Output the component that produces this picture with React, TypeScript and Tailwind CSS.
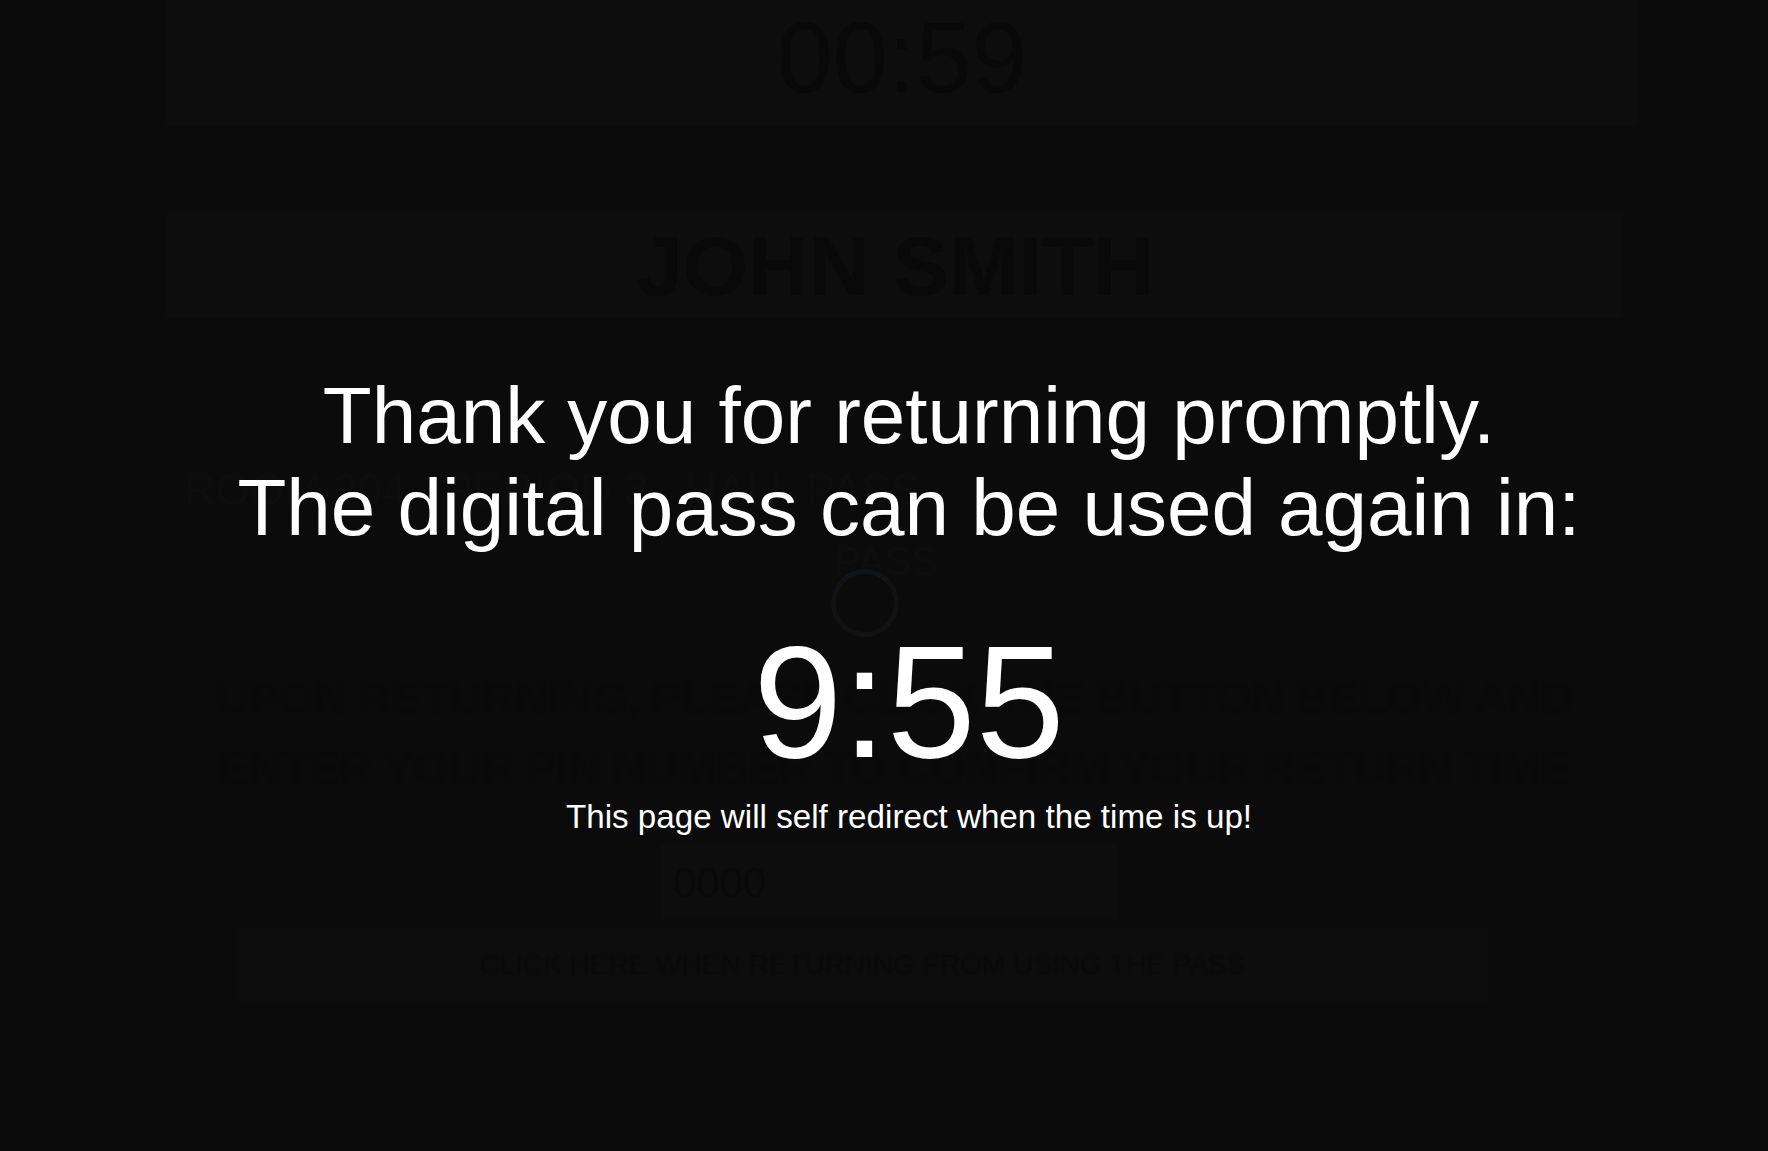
import { useEffect, useState } from "react"

const font = { fontFamily: '"Liberation Sans", Arial, sans-serif' }

function formatTime(total: number) {
  const m = Math.floor(total / 60)
  const s = total % 60
  return `${m}:${s.toString().padStart(2, "0")}`
}

export default function App() {
  // cooldown stays frozen for the screenshot
  const [remaining] = useState(595)
  const [passTime] = useState("00:59")

  useEffect(() => {
    document.body.style.backgroundColor = "#0b0b0b"
  }, [])

  return (
    <div className="relative h-[1151px] w-full overflow-hidden bg-[#0b0b0b]" style={font}>
      {/* pass page, dimmed behind the overlay */}
      <div className="flex flex-col items-start">
        <div className="ml-[167px] flex h-[126px] w-[1470px] justify-center bg-[#0d0d0d]">
          <span className="text-[100px] leading-[115px] text-[#090909]">{passTime}</span>
        </div>

        <div className="ml-[167px] mt-[85px] flex h-[107px] w-[1456px] justify-center bg-[#0d0d0d] pt-[7px]">
          <span className="text-[84px] font-bold leading-[97px] text-[#090909]">JOHN SMITH</span>
        </div>

        <div className="ml-[184px] mt-[149px] h-[46px] whitespace-nowrap text-[44px] leading-[46px] text-[#0d0d0d]">
          ROOM 204 &nbsp; PERIOD 3 &nbsp; HALL PASS
        </div>

        <div className="mt-[28px] flex w-full flex-col items-center">
          <span className="mr-[-4px] text-[40px] leading-[40px] text-[#0d0d0d]">PASS</span>
          <div className="mr-[38px] mt-[-12px] h-[68px] w-[68px] rounded-full border-[5px] border-[#121212] border-t-[#10151b]" />
        </div>

        <div className="ml-[193px] mt-[26px] w-[1402px] text-center text-[47px] font-bold uppercase leading-[70px] tracking-tight text-[#0a0a0a]">
          <p className="whitespace-nowrap">Upon returning, please click the button below and</p>
          <p className="whitespace-nowrap">enter your pin number to confirm your return time</p>
        </div>

        <div className="ml-[661px] mt-[42px] flex h-[74px] w-[456px] items-center bg-[#0d0d0d] px-3">
          <span className="text-[42px] text-[#090909]">0000</span>
        </div>

        <div className="ml-[237px] mt-[8px] flex h-[75px] w-[1251px] items-center justify-center bg-[#0c0c0c]">
          <span className="whitespace-nowrap text-[28px] uppercase text-[#0a0a0a]">Click here when returning from using the pass</span>
        </div>
      </div>

      {/* cooldown overlay */}
      <div className="absolute inset-0 flex flex-col items-center pl-[50px] pt-[370px] text-white">
        <h1 className="text-center text-[80px] font-normal leading-[92px]">
          Thank you for returning promptly.
          <br />
          The digital pass can be used again in:
        </h1>
        <div className="mt-[56px] text-[160px] leading-[184px]">{formatTime(remaining)}</div>
        <p className="mt-[4px] text-[33.2px] leading-[38px]">This page will self redirect when the time is up!</p>
      </div>
    </div>
  )
}
